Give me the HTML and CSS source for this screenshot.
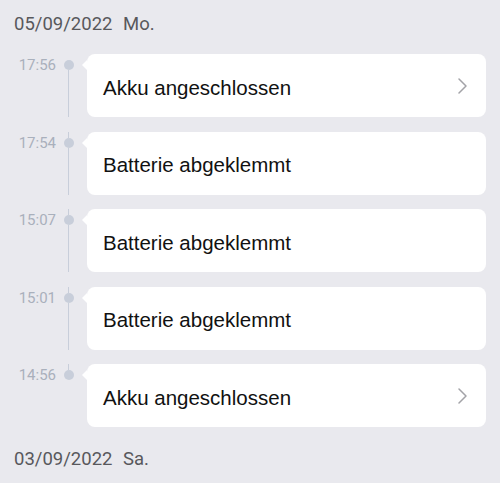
FILE: index.html
```html
<!DOCTYPE html>
<html lang="de">
<head>
  <meta charset="UTF-8" />
  <meta name="viewport" content="width=device-width, initial-scale=1.0" />
  <title>Ereignisse</title>
  <link rel="stylesheet" href="styles.css">
</head>
<body>
  <div class="day">
    <div class="day-title">05/09/2022 <span class="weekday">Mo.</span></div>
    <div class="entries">
      <div class="entry">
        <div class="stamp">17:56</div>
        <div class="rail"><span class="line-up"></span><span class="dot"></span><span class="line-down"></span></div>
        <div class="card">
          <span class="label">Akku angeschlossen</span>
          <svg class="chevron" width="9" height="16" viewBox="0 0 9 16"><polyline points="1,1 8,8 1,15" fill="none" stroke="#a3a3a8" stroke-width="1.5" stroke-linecap="round" stroke-linejoin="round"/></svg>
        </div>
      </div>
      <div class="entry">
        <div class="stamp">17:54</div>
        <div class="rail"><span class="line-up"></span><span class="dot"></span><span class="line-down"></span></div>
        <div class="card"><span class="label">Batterie abgeklemmt</span></div>
      </div>
      <div class="entry">
        <div class="stamp">15:07</div>
        <div class="rail"><span class="line-up"></span><span class="dot"></span><span class="line-down"></span></div>
        <div class="card"><span class="label">Batterie abgeklemmt</span></div>
      </div>
      <div class="entry">
        <div class="stamp">15:01</div>
        <div class="rail"><span class="line-up"></span><span class="dot"></span><span class="line-down"></span></div>
        <div class="card"><span class="label">Batterie abgeklemmt</span></div>
      </div>
      <div class="entry">
        <div class="stamp">14:56</div>
        <div class="rail"><span class="line-up"></span><span class="dot"></span><span class="line-down"></span></div>
        <div class="card">
          <span class="label">Akku angeschlossen</span>
          <svg class="chevron" width="9" height="16" viewBox="0 0 9 16"><polyline points="1,1 8,8 1,15" fill="none" stroke="#a3a3a8" stroke-width="1.5" stroke-linecap="round" stroke-linejoin="round"/></svg>
        </div>
      </div>
    </div>
  </div>
  <div class="day">
    <div class="day-title">03/09/2022 <span class="weekday">Sa.</span></div>
  </div>
</body>
</html>
```

FILE: styles.css
```css
body {
  margin: 0;
  background-color: #e9e9ee;
  font-family: "Liberation Sans", Arial, sans-serif;
  overflow: hidden;
}
.day {
  padding-bottom: 8px;
}
.day-title {
  padding: 12px 14px 0;
  font-family: Roboto, "Liberation Sans", sans-serif;
  font-size: 18.5px;
  line-height: 25px;
  color: #58585c;
}
.weekday {
  margin-left: 6px;
}
.entries {
  margin-top: 17px;
}
.entry {
  display: flex;
  align-items: stretch;
  padding-bottom: 14.5px;
}
.entry:last-child {
  padding-bottom: 0;
}
.stamp {
  width: 56px;
  text-align: right;
  padding-top: 1px;
  font-family: Roboto, "Liberation Sans", sans-serif;
  font-size: 15px;
  line-height: 20px;
  color: #a9b0bc;
}
.rail {
  width: 25px;
  display: flex;
  flex-direction: column;
  align-items: center;
}
.line-up {
  width: 1px;
  height: 6px;
  background: #c8ceda;
}
.dot {
  width: 10px;
  height: 10px;
  border-radius: 50%;
  background: #c8ceda;
}
.line-down {
  width: 1px;
  flex: 1;
  background: #c8ceda;
}
.entry:first-child .line-up,
.entry:last-child .line-down {
  visibility: hidden;
}
.card {
  position: relative;
  flex: 1;
  margin-left: 6px;
  margin-right: 14px;
  height: 63px;
  background: #fff;
  border-radius: 8px;
  display: flex;
  align-items: center;
  justify-content: space-between;
  padding: 4px 19px 0 16px;
  box-sizing: border-box;
}
.card::before {
  content: "";
  position: absolute;
  left: -5px;
  top: 6px;
  border-top: 5px solid transparent;
  border-bottom: 5px solid transparent;
  border-right: 5px solid #fff;
}
.label {
  font-size: 20.5px;
  color: #111;
}
.chevron {
  display: block;
  margin-top: -4px;
}
```
